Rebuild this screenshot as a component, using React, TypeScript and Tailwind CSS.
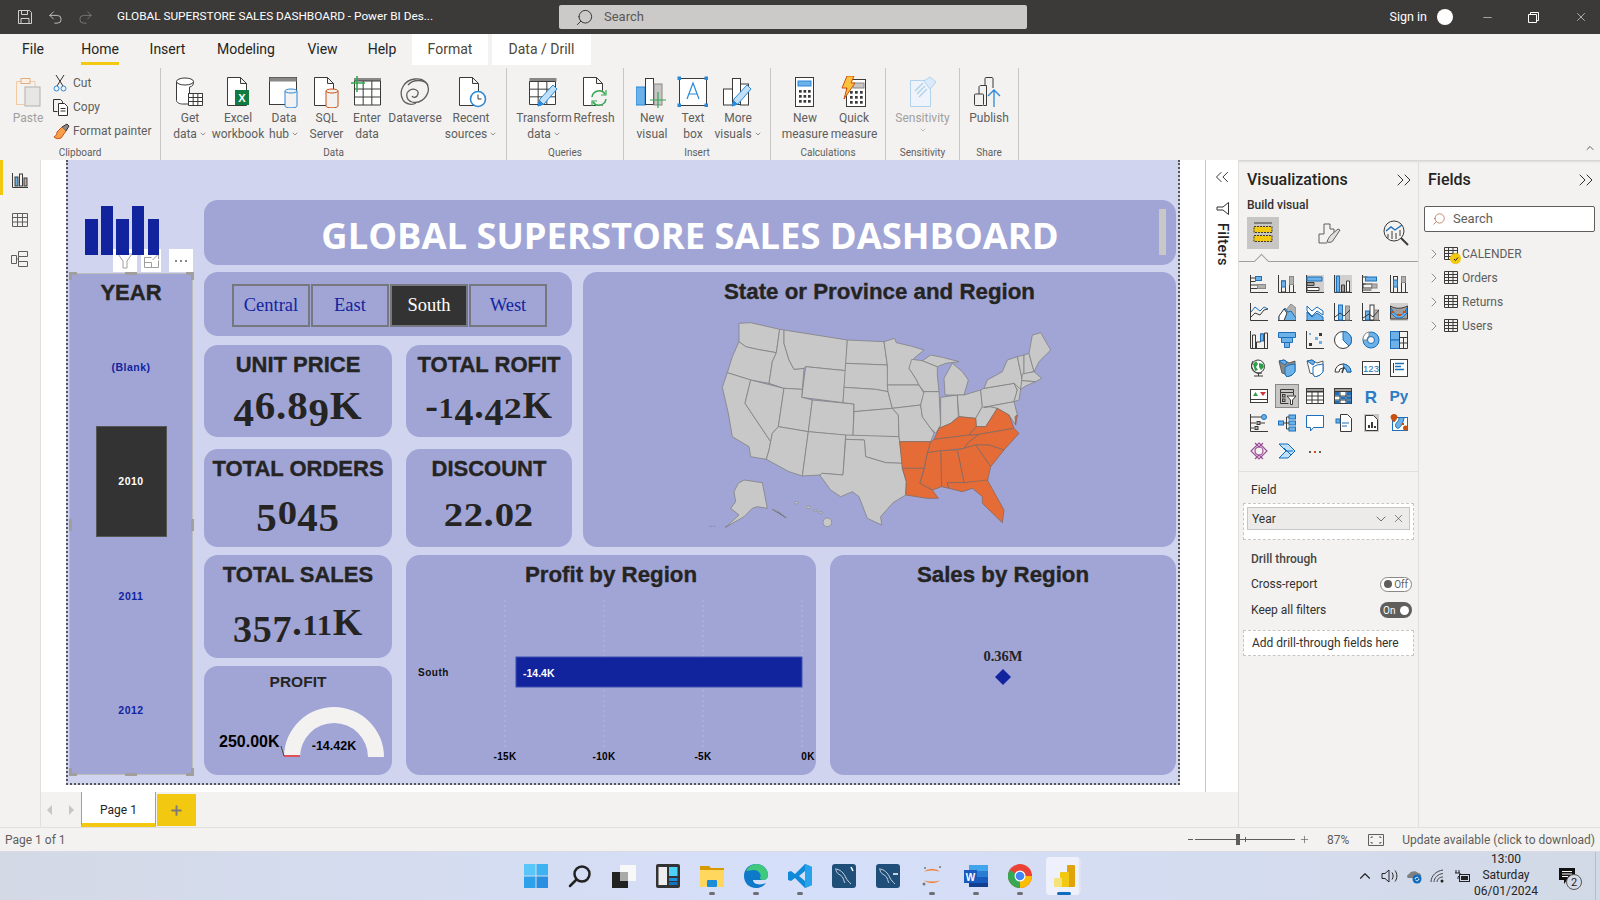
import React from 'react';
import { Search, ChevronRight, ChevronDown, ChevronsLeft, ChevronsRight, X, Minus, Undo2, Redo2, ChevronUp, Plus } from 'lucide-react';

const K = '#3b3a39', BF = '#6cb1e8', BS = '#1c6fb8', GF = '#b3b1af';
const ARIAL = "[font-family:'Liberation_Sans',Arial,sans-serif]";
const SERIF = "[font-family:'Liberation_Serif',serif]";
const UI = "[font-family:Roboto,sans-serif]";
const HEAVY = '[-webkit-text-stroke:0.35px_#252423]';

function I({ s = 32, vb = 32, children, className = '' }: { s?: number; vb?: number; children: React.ReactNode; className?: string }) {
  return <svg width={s} height={s} viewBox={`0 0 ${vb} ${vb}`} fill="none" stroke={K} strokeWidth={1} className={className}>{children}</svg>;
}
const Doc = ({ x = 5, w = 16, h = 28 }: { x?: number; w?: number; h?: number }) => (
  <path d={`M${x + .5} 1.5h${w - 6}l6 6v${h - 6}h-${w}z M${x + w - 6 + .5} 1.5v6h6`} fill="#fff" />
);
const Cyl = ({ x, y, w, h, c }: { x: number; y: number; w: number; h: number; c: string }) => (
  <g stroke={c} fill="#f3f2f1"><path d={`M${x} ${y + 2}v${h}c0 2.5 ${w} 2.5 ${w} 0v-${h}`} /><ellipse cx={x + w / 2} cy={y + 2} rx={w / 2} ry={2} /></g>
);
const Grid = ({ x, y, w, h, nx, ny }: { x: number; y: number; w: number; h: number; nx: number; ny: number }) => {
  const d: string[] = [`M${x} ${y}h${w}v${h}h-${w}z`];
  for (let i = 1; i < nx; i++) d.push(`M${x + (w * i) / nx} ${y}v${h}`);
  for (let j = 1; j < ny; j++) d.push(`M${x} ${y + (h * j) / ny}h${w}`);
  return <path d={d.join('')} fill="#fff" />;
};
const Pencil = ({ x = 0, y = 0 }: { x?: number; y?: number }) => (
  <g transform={`translate(${x} ${y})`}><path d="M2 27l2-7L17 6l4 4L8 25z" fill="#bfe0f8" stroke="#2b88d8" /><path d="M2 27l2-5 3 3z" fill="#2b88d8" stroke="#2b88d8" /></g>
);

const rib: Record<string, React.ReactNode> = {
  get: <I><path d="M2.5 5.5v19c0 2 3 3.5 6 3.5h7V11c3-.5 4-2 4-5.5" fill="#fff" /><ellipse cx="11" cy="5.5" rx="8.5" ry="3.5" fill="#fff" /><rect x="14" y="17" width="15" height="3" fill={K} stroke="none" /><Grid x={14.5} y={17.5} w={14} h={12} nx={3} ny={3} /></I>,
  excel: <I><Doc x={5} w={19} h={28} /><rect x="13" y="14" width="14" height="15" fill="#107c41" stroke="none" /><text x="20" y="26" textAnchor="middle" fontSize="11" fontWeight="700" fill="#fff" stroke="none" fontFamily="Liberation Sans">X</text></I>,
  hub: <I><rect x="1.5" y="1.5" width="27" height="27" fill="#fff" /><rect x="1.5" y="1.5" width="27" height="4" fill="#8a8886" stroke="none" /><Cyl x={17} y={13} w={12} h={15} c="#2b88d8" /></I>,
  sql: <I><Doc x={3} w={19} h={28} /><Cyl x={15} y={13} w={12} h={15} c="#ca5010" /></I>,
  enter: <I><rect x="3" y="2" width="27" height="3" fill="#8a8886" stroke="none" /><Grid x={3.5} y={5} w={26} h={24} nx={3} ny={3} /><path d="M6 0v16M0 7h14" stroke="#33a853" strokeWidth="1.6" /></I>,
  dv: <I><path d="M4 24C-1 15 5 4 16 3c9-1 15 5 13 13-2 7-9 12-16 10-6-2-7-9-2-12 4-2 9 0 8 4s-5 4-6 2" strokeWidth="1.3" stroke="#605e5c" /><path d="M4 24c3 5 10 5 13 3M29 9C25 3 14 3 9 9" stroke="#605e5c" strokeWidth="1.3" /></I>,
  recent: <I><Doc x={4} w={19} h={28} /><circle cx="23" cy="23" r="7.5" fill="#fff" stroke="#2b88d8" strokeWidth="1.6" /><path d="M23 18.5V23h3.5" /></I>,
  transform: <I><rect x="1.5" y="2" width="27" height="3.5" fill="#8a8886" stroke="none" /><Grid x={1.5} y={5.5} w={26} h={23} nx={3} ny={3} /><Pencil x={8} y={3} /></I>,
  refresh: <I><Doc x={5} w={19} h={28} /><circle cx="21" cy="22" r="8" fill="#f3f2f1" stroke="none" /><path d="M14 21c1-7 10-8 13-3M28 23c-1 7-10 8-13 3" stroke="#33a853" strokeWidth="1.5" /><path d="M28 14v5h-5M14 30v-5h5" stroke="#33a853" strokeWidth="1.2" /></I>,
  newv: <I><rect x="0" y="11" width="9" height="18" fill={BF} stroke="#2b88d8" /><rect x="9.5" y="2.5" width="8" height="26" fill="#fff" /><rect x="18" y="8" width="8" height="21" fill="#c8c6c4" stroke="#8a8886" /><path d="M22 16v16M14 24h16" stroke="#33a853" strokeWidth="1.2" /></I>,
  text: <I><rect x="2.5" y="2.5" width="27" height="27" fill="#fff" /><path d="M10 23l6-16 6 16M12 18h8" stroke="#2b88d8" strokeWidth="1.2" />{[[0.5, 0.5], [27.5, 0.5], [0.5, 27.5], [27.5, 27.5]].map(([a, b], i) => <rect key={i} x={a} y={b} width="3.5" height="3.5" fill="#2b88d8" stroke="none" />)}</I>,
  more: <I><rect x="1.5" y="13" width="9" height="16" fill="#fff" /><rect x="10.5" y="2.5" width="8" height="26" fill="#fff" /><rect x="18.5" y="8" width="8" height="21" fill="#fff" /><Pencil x={8} y={3} /></I>,
  newm: <I><rect x="6.5" y="1.5" width="18" height="29" fill="#fff" /><rect x="9" y="5" width="13" height="5" fill={BF} stroke="#2b88d8" />{[14, 19, 24].flatMap(y => [10, 14.5, 19].map(x => <rect key={`${x}${y}`} x={x} y={y} width="2.7" height="2.7" fill={K} stroke="none" />))}</I>,
  quick: <I><rect x="8.5" y="3.5" width="19" height="27" fill="#fff" /><rect x="15" y="7" width="11" height="5" fill="#c8c6c4" stroke="#8a8886" />{[15, 20, 25].flatMap(y => [12, 17, 22].map(x => <rect key={`${x}${y}`} x={x} y={y} width="2.7" height="2.7" fill={K} stroke="none" />))}<path d="M9 0h7l-3 7h4L6 23l3-11H4z" fill="#fcc23d" stroke="#ca5010" /></I>,
  sens: <I><path d="M3.5 4.5h20v26h-20z" stroke="#a9cfec" fill="#eef5fb" /><path d="M8 15l8-8M10 18l8-8M12 21l8-8" stroke="#a9cfec" strokeWidth="1.4" /><path d="M17 5l6-4 6 5-6 7z" stroke="#a9cfec" fill="#dbeafa" /></I>,
  pub: <I><rect x="1.5" y="18" width="9" height="11.5" fill="none" rx="1" /><path d="M6 18v-7c0-1 1-1.5 2-1.5h5.500V29.500H10.500M12 9V2.500c0-.5.5-1 1-1h6c.5 0 1 .5 1 1V12" /><path d="M21 31V14M15 20l6-6 6 6" stroke="#2b88d8" strokeWidth="1.3" /></I>,
};

function Rb({ w, icon, l1, l2, chev, dim }: { w: number; icon: string; l1: string; l2?: string; chev?: boolean; dim?: boolean }) {
  return (
    <div style={{ width: w }} className={`flex flex-col items-center text-[12px] leading-[16px] whitespace-nowrap ${dim ? 'text-[#a19f9d]' : 'text-[#605e5c]'}`}>
      <div className={`h-[32px] mt-[8px] mb-[2px] ${dim ? 'opacity-90' : ''}`}>{rib[icon]}</div>
      <div>{l1}</div>
      {(l2 || chev) && <div className="flex items-center gap-[2px]">{l2}{chev && <ChevronDown size={8} strokeWidth={2} />}</div>}
    </div>
  );
}
function Group({ w, label, pl = 0, children }: { w: number; label: string; pl?: number; children: React.ReactNode }) {
  return (
    <div style={{ width: w }} className="h-[92px] border-r border-[#c8c6c4] flex flex-col justify-between shrink-0">
      <div className="flex" style={{ paddingLeft: pl }}>{children}</div>
      <div className="text-center text-[10px] leading-[12px] text-[#605e5c] mb-[1px]">{label}</div>
    </div>
  );
}

function TitleBar() {
  return (
    <div className="h-[34px] bg-[#3b3a39] flex items-center text-white shrink-0 relative">
      <svg width="16" height="16" viewBox="0 0 16 16" fill="none" stroke="#d2d0ce" className="ml-[17px]"><path d="M1.500 1.500h11l2 2v11h-13zM4.500 1.500v4h6v-4M4 14.500v-5h8v5" /></svg>
      <Undo2 size={17} strokeWidth={1.2} color="#d2d0ce" className="ml-[14px]" />
      <Redo2 size={17} strokeWidth={1.2} color="#807e7c" className="ml-[13px]" />
      <div className="ml-[23px] w-[312px] text-[11.800px] whitespace-nowrap">GLOBAL SUPERSTORE SALES DASHBOARD - Power BI Des...</div>
      <div className="ml-[130px] w-[468px] h-[24px] bg-[#cbcac8] rounded-[2px] flex items-center text-[#5a5856] text-[13px] pl-[16px] gap-[10px]">
        <Search size={19} strokeWidth={1.2} color="#323130" className="-scale-x-100" />Search
      </div>
      <div className="ml-auto flex items-center">
        <span className="text-[12.500px]">Sign in</span>
        <span className="w-[16px] h-[16px] rounded-full bg-white ml-[10px] mr-[28px]" />
        <Minus size={13} strokeWidth={1} className="mr-[34px]" />
        <svg width="11" height="11" viewBox="0 0 11 11" fill="none" stroke="#fff" className="mr-[35px]"><path d="M.5 2.500h8v8h-8zM2.500 2.500v-2h8v8h-2" /></svg>
        <X size={14} strokeWidth={1} className="mr-[12px]" />
      </div>
    </div>
  );
}

function Tabs() {
  const t: [string, number, number][] = [['File', 23, 20], ['Home', 38, 38], ['Insert', 31, 35], ['Modeling', 32, 58], ['View', 33, 29], ['Help', 31, 28]];
  return (
    <div className="h-[34px] flex items-start text-[14px] text-[#252423] shrink-0">
      {t.map(([n, m, w]) => (
        <div key={n} style={{ marginLeft: m, width: w }} className="h-[31px] flex justify-center items-center relative whitespace-nowrap">
          {n}
          {n === 'Home' && <span className="absolute left-0 right-0 bottom-0 h-[3px] bg-[#f2c811]" />}
        </div>
      ))}
      <div className="ml-[16px] w-[76px] h-[31px] bg-white text-[#4f4636] flex items-center justify-center">Format</div>
      <div className="ml-[4px] w-[99px] h-[31px] bg-white text-[#4f4636] flex items-center justify-center">Data / Drill</div>
    </div>
  );
}

function Ribbon() {
  return (
    <div className="h-[92px] flex items-start relative shrink-0 text-[#605e5c]">
      <Group w={161} label="Clipboard">
        <div className="w-[56px] flex flex-col items-center text-[12px] text-[#a19f9d]">
          <div className="h-[32px] mt-[8px] mb-[2px]">
            <svg width="28" height="32" viewBox="0 0 28 32" fill="none"><path d="M2.500 5.500h5M16 5.500h5v5M2.500 5.500v23h8" stroke="#f2c9a0" /><rect x="7" y="2.500" width="9" height="5" stroke="#e0ad80" fill="#fbefe3" /><rect x="11" y="11" width="15" height="19" fill="#e8e6e4" stroke="#b3b0ad" /></svg>
          </div>
          <div className="leading-[16px]">Paste</div>
        </div>
        <div className="flex flex-col text-[12px] text-[#605e5c] pt-[3px] -ml-[3px]">
          <div className="h-[24px] flex items-center"><svg width="14" height="18" viewBox="0 0 14 18" fill="none" stroke="#323130"><path d="M3 1l7 11M11 1L4 12" /><circle cx="3.500" cy="14.500" r="2.500" stroke="#2b88d8" /><circle cx="10.500" cy="14.500" r="2.500" stroke="#2b88d8" /></svg><span className="ml-[6px]">Cut</span></div>
          <div className="h-[24px] flex items-center"><svg width="16" height="17" viewBox="0 0 16 17" fill="none" stroke="#323130"><path d="M.5.5h7l2 2v2M.5.5v12h4" /><path d="M5.500 4.500h6l3 3v9h-9z" fill="#fff" /><path d="M7.500 9.500h5M7.500 12h5" /></svg><span className="ml-[4px]">Copy</span></div>
          <div className="h-[24px] flex items-center"><svg width="17" height="17" viewBox="0 0 17 17" fill="none"><path d="M9 4l4 4-5 7c-2 1-5 1-7-1 2-1 3-3 3-5z" fill="#f7a04b" stroke="#ca5010" /><path d="M9 4l5-3 2 2-3 5" fill="#8a8886" stroke="#323130" /></svg><span className="ml-[3px] whitespace-nowrap">Format painter</span></div>
        </div>
      </Group>
      <Group w={346} label="Data" pl={5}>
        <Rb w={48} icon="get" l1="Get" l2="data" chev />
        <Rb w={48} icon="excel" l1="Excel" l2="workbook" />
        <Rb w={44} icon="hub" l1="Data" l2="hub" chev />
        <Rb w={41} icon="sql" l1="SQL" l2="Server" />
        <Rb w={40} icon="enter" l1="Enter" l2="data" />
        <Rb w={56} icon="dv" l1="Dataverse" />
        <Rb w={56} icon="recent" l1="Recent" l2="sources" chev />
      </Group>
      <Group w={117} label="Queries" pl={7}>
        <Rb w={60} icon="transform" l1="Transform" l2="data" chev />
        <Rb w={40} icon="refresh" l1="Refresh" />
      </Group>
      <Group w={147} label="Insert" pl={8}>
        <Rb w={40} icon="newv" l1="New" l2="visual" />
        <Rb w={42} icon="text" l1="Text" l2="box" />
        <Rb w={48} icon="more" l1="More" l2="visuals" chev />
      </Group>
      <Group w={115} label="Calculations" pl={8}>
        <Rb w={52} icon="newm" l1="New" l2="measure" />
        <Rb w={46} icon="quick" l1="Quick" l2="measure" />
      </Group>
      <Group w={74} label="Sensitivity">
        <Rb w={74} icon="sens" l1="Sensitivity" dim chev />
      </Group>
      <Group w={59} label="Share">
        <Rb w={59} icon="pub" l1="Publish" />
      </Group>
      <ChevronUp size={12} strokeWidth={1.5} className="absolute right-[4px] bottom-[6px]" color="#323130" />
    </div>
  );
}

type Pt = string;
const STATES: [Pt, boolean?][] = [
  ['150,70 185,68 272,88 262,158 205,148 170,140 150,125'],
  ['150,125 170,140 205,148 262,158 250,185 240,250 185,240 115,218 130,170'],
  ['115,218 185,240 168,310 245,425 240,450 232,478 185,470 180,440 130,410 118,340 100,262'],
  ['185,240 285,265 268,380 250,400 245,425 168,310'],
  ['272,88 285,90 285,130 300,180 315,208 345,205 340,268 285,265 240,250 250,185 262,158'],
  ['285,90 475,120 470,212 350,200 345,205 315,208 300,180 285,130'],
  ['350,200 470,212 462,308 338,292'],
  ['285,265 340,268 338,292 370,300 358,395 268,380'],
  ['370,300 495,312 492,408 358,395'],
  ['268,380 358,395 340,528 300,515 232,478 240,450 245,425 250,400'],
  ['358,395 470,405 462,525 400,520 392,525 340,528'],
  ['475,120 585,125 595,195 470,190'],
  ['470,190 595,195 597,275 560,268 465,262'],
  ['465,262 560,268 597,275 610,325 495,335 495,312 462,308'],
  ['495,335 610,325 628,345 630,410 492,408'],
  ['470,405 630,410 632,425 640,490 590,488 530,470 526,420 470,418'],
  ['470,418 526,420 530,470 590,488 640,490 640,505 652,545 650,585 612,608 575,650 578,675 535,655 510,590 490,575 455,590 425,570 392,525 400,520 462,525'],
  ['585,125 617,115 622,128 665,138 705,150 675,175 660,205 680,235 690,255 595,255 595,195'],
  ['595,255 690,255 705,280 695,315 610,325 597,275'],
  ['610,325 695,315 700,350 725,385 735,400 725,425 632,425 630,410 628,345'],
  ['668,178 700,182 745,200 745,225 750,275 705,275 690,255 680,235 660,205'],
  ['705,275 750,275 755,375 740,400 725,385 700,350 695,315'],
  ['755,292 805,285 808,350 785,370 750,385 755,375'],
  ['700,182 725,165 760,172 810,185 770,190 745,200'],
  ['768,285 765,235 790,190 820,215 838,240 825,285'],
  ['805,285 825,285 875,270 880,320 860,355 810,350'],
  ['880,320 905,320 925,325 890,380 862,380 860,355'],
  ['875,270 885,265 975,250 985,270 975,305 885,322 880,320'],
  ['885,265 895,240 940,215 955,180 985,170 1000,240 995,268 985,270 975,250'],
  ['885,322 975,305 985,345 978,372 960,345 925,325 905,320'],
  ['975,250 995,268 990,300 975,305 985,270'],
  ['985,170 1005,165 1005,222 1000,240'],
  ['1005,165 1020,160 1035,215 1005,222'],
  ['1020,160 1030,105 1055,98 1085,150 1050,185 1035,215'],
  ['1000,222 1035,215 1058,235 1040,245 998,242'],
  ['998,242 1040,245 1010,258 995,268'],
  ['165,540 220,548 235,625 205,620 190,625 165,650 130,670 110,682 150,645 125,625 140,605 135,575 148,550'],
  ['735,418 750,385 785,370 810,350 860,355 862,380 840,405', true],
  ['735,418 840,405 870,403 840,425 825,445 715,458 725,425', true],
  ['840,405 862,380 890,380 925,325 960,345 975,385 870,403', true],
  ['870,403 975,385 990,400 945,450 900,435 860,435 825,445 840,425', true],
  ['860,435 900,435 945,450 905,500', true],
  ['805,450 825,445 860,435 905,500 895,545 825,548', true],
  ['755,452 805,450 825,548 775,548 780,565 758,560', true],
  ['715,458 755,452 758,560 730,570 692,550 705,510', true],
  ['632,425 725,425 715,458 705,505 640,505', true],
  ['640,505 705,505 692,550 730,570 748,595 715,595 650,585 652,545', true],
  ['775,548 825,548 895,540 945,630 940,668 880,610 880,590 850,565 820,575 780,565', true],
  ['978,350 985,345 980,375', true],
];
function USMap() {
  return (
    <svg width="380" height="240" viewBox="0 0 1140 720" className="ml-[106px] -mt-[5px]">
      {STATES.map(([p, s], i) => <polygon key={i} points={p} fill={s ? '#e66c37' : '#c8c8c8'} stroke={s ? '#85695f' : '#828282'} strokeWidth="2.4" strokeLinejoin="round" />)}
      {[[322, 608, 5, 4], [358, 622, 6, 4], [380, 632, 5, 3], [395, 638, 5, 3], [415, 667, 13, 13]].map(([x, y, a, b], i) => <ellipse key={i} cx={x} cy={y} rx={a} ry={b} fill="#c8c8c8" stroke="#828282" strokeWidth="2" />)}
      <path d="M250 628l20 10 22 16" stroke="#828282" strokeWidth="5" strokeDasharray="4 2" />
      <path d="M60 679h20M108 680l14-5" stroke="#828282" strokeWidth="3" strokeDasharray="3 3" />
    </svg>
  );
}

function Old({ s }: { s: string }) {
  return (
    <>
      {s.split('').map((c, i) =>
        '02'.includes(c) ? <span key={i} className="inline-block w-[0.6em] text-center text-[0.8em] scale-x-[1.18]">{c}</span> :
        c === '1' ? <span key={i} className="text-[0.8em]">{c}</span> :
        '34579'.includes(c) ? <span key={i} className="relative top-[0.18em]">{c}</span> :
        <span key={i}>{c}</span>
      )}
    </>
  );
}

function Kpi({ t, v, className, gap = 0, small }: { t: string; v: string; className: string; gap?: number; small?: boolean }) {
  return (
    <div className={`bg-[#a0a5d6] rounded-[14px] flex flex-col items-center pt-[7px] ${className}`}>
      <div className={`${ARIAL} ${HEAVY} font-bold text-[22px] leading-[26px] text-[#252423] whitespace-nowrap`}>{t}</div>
      <div style={{ marginTop: gap }} className={`${SERIF} font-bold ${small ? 'text-[38px]' : 'text-[41px]'} leading-[44px] text-[#252423] tracking-[0.02em] whitespace-nowrap`}><Old s={v} /></div>
    </div>
  );
}

function YearSlicer() {
  const Handle = ({ c }: { c: string }) => <span className={`absolute bg-[#a19f9d] ${c}`} />;
  return (
    <div className="relative h-[502px] ml-[1px] w-[124px] bg-[#a0a5d6] border border-[#bdbdbd] flex flex-col">
      <div className={`${ARIAL} ${HEAVY} font-bold text-[22px] leading-[26px] text-[#252423] text-center pt-[6px] h-[37px]`}>YEAR</div>
      {['(Blank)', '2010', '2011', '2012'].map(y => (
        <div key={y} className={`h-[114.3px] flex items-center justify-center ${ARIAL} font-bold text-[10.5px] tracking-[0.5px]`}>
          {y === '2010'
            ? <div className="w-[71px] h-[111px] -translate-y-[1px] bg-[#333333] border border-[#555] text-white flex items-center justify-center">2010</div>
            : <span className="text-[#12239e]">{y}</span>}
        </div>
      ))}
      <div className="absolute -top-[25px] left-[43px] flex">
        <div className="w-[24px] h-[23px] bg-white flex items-center justify-center"><svg width="16" height="16" viewBox="0 0 16 16" fill="none" stroke="#a19f9d"><path d="M1 1h14l-5 7v7H6V8z" /></svg></div>
        <div className="ml-[4px] w-[20px] h-[23px] bg-white flex items-center justify-center"><svg width="15" height="14" viewBox="0 0 15 14" fill="none" stroke="#a19f9d"><path d="M.5 3.500h7M.5 3.500v10h14v-7M.5 8.500h7v5M8.500 6L14 .5M10 .5h4.500v4.500" /></svg></div>
        <div className="ml-[8px] w-[24px] h-[23px] bg-white flex items-center justify-center gap-[3px]">{[0, 1, 2].map(i => <span key={i} className="w-[2px] h-[2px] bg-[#8a8886]" />)}</div>
      </div>
      <Handle c="-top-[2px] -left-[1px] w-[8px] h-[3px]" />
      <Handle c="-top-[2px] -left-[1px] w-[3px] h-[8px]" />
      <Handle c="-top-[2px] -right-[2px] w-[8px] h-[3px]" />
      <Handle c="-top-[2px] -right-[2px] w-[3px] h-[8px]" />
      <Handle c="-top-[2px] left-[55px] w-[12px] h-[3px]" />
      <Handle c="-bottom-[2px] -left-[1px] w-[8px] h-[3px]" />
      <Handle c="-bottom-[2px] -left-[1px] w-[3px] h-[8px]" />
      <Handle c="-bottom-[2px] -right-[2px] w-[8px] h-[3px]" />
      <Handle c="-bottom-[2px] -right-[2px] w-[3px] h-[8px]" />
      <Handle c="-bottom-[2px] left-[55px] w-[12px] h-[3px]" />
      <Handle c="top-[245px] -right-[2px] w-[3px] h-[12px]" />
      <Handle c="top-[245px] -left-[1px] w-[3px] h-[12px]" />
    </div>
  );
}

function Dashboard() {
  const Reg = ({ n, on }: { n: string; on?: boolean }) => (
    <div className={`w-[78px] h-[43px] border-2 border-[#77787f] flex items-center justify-center pt-[2px] ${SERIF} text-[18.500px] ${on ? 'bg-[#333333] text-white' : 'text-[#12239e]'}`}>{n}</div>
  );
  const card = 'bg-[#a0a5d6] rounded-[14px]';
  const bigT = `${ARIAL} ${HEAVY} font-bold text-[22.300px] leading-[26px] text-[#252423] text-center`;
  return (
    <div className="w-[1114px] h-[625px] ml-[25px] bg-[#d0d4ee] border-x-2 border-b-2 border-dotted border-[#555] flex shrink-0">
      <div className="w-[125px] shrink-0 flex flex-col">
        <svg width="76" height="49" viewBox="0 0 76 49" className="ml-[17px] mt-[46px] relative z-10" fill="#12239e">
          <rect x="0" y="13" width="13" height="36" /><rect x="16" y="0" width="12" height="49" /><rect x="31" y="13" width="13" height="36" /><rect x="47" y="0" width="12" height="49" /><rect x="63" y="13" width="11" height="36" />
        </svg>
        <div className="mt-[18px]"><YearSlicer /></div>
      </div>
      <div className="w-[972px] ml-[11px] pt-[40px] flex flex-col shrink-0">
        <div className={`${card} h-[65px] relative flex items-center justify-center shrink-0`}>
          <div className="[font-family:'Open_Sans',sans-serif] font-bold text-white text-[36.300px] leading-none whitespace-nowrap pt-[5px]">GLOBAL SUPERSTORE SALES DASHBOARD</div>
          <span className="absolute right-[10px] top-[9px] w-[7px] h-[46px] bg-[#c8c8c8]" />
        </div>
        <div className="flex mt-[7px] h-[275px] gap-[11px] shrink-0">
          <div className="w-[368px] flex flex-col">
            <div className={`${card} h-[64px] flex items-center gap-[1px] pl-[28px] pt-[2px]`}>
              <Reg n="Central" /><Reg n="East" /><Reg n="South" on /><Reg n="West" />
            </div>
            <div className="flex mt-[9px] justify-between">
              <Kpi t="UNIT PRICE" v="46.89K" className="w-[188px] h-[92px]" gap={5} />
              <Kpi t="TOTAL ROFIT" v="-14.42K" className="w-[166px] h-[92px]" gap={5} small />
            </div>
            <div className="flex mt-[12px] justify-between">
              <Kpi t="TOTAL ORDERS" v="5045" className="w-[188px] h-[98px]" gap={6} />
              <Kpi t="DISCOUNT" v="22.02" className="w-[166px] h-[98px]" gap={8} />
            </div>
          </div>
          <div className={`${card} w-[593px] flex flex-col`}>
            <div className={`${bigT} pt-[7px]`}>State or Province and Region</div>
            <USMap />
          </div>
        </div>
        <div className="flex mt-[8px] h-[220px] gap-[14px] shrink-0">
          <div className="w-[188px] flex flex-col gap-[8px]">
            <Kpi t="TOTAL SALES" v="357.11K" className="h-[103px]" gap={12} small />
            <div className={`${card} h-[109px] flex flex-col items-center pt-[7px]`}>
              <div className={`${ARIAL} font-bold text-[15.500px] leading-[18px] text-[#252423]`}>PROFIT</div>
              <svg width="188" height="84" viewBox="0 25 188 84">
                <path d="M80 91A50 50 0 0 1 180 91H164A34 34 0 0 0 96 91Z" fill="#f3f2f1" />
                <rect x="80" y="89" width="16" height="2" fill="#e0505a" />
                <path d="M77 80l3 10" stroke="#444" strokeWidth="1" fill="none" />
                <text x="15" y="81" fontFamily="Liberation Sans" fontWeight="700" fontSize="16" fill="#000">250.00K</text>
                <text x="130" y="84" textAnchor="middle" fontFamily="Liberation Sans" fontWeight="700" fontSize="12.500" fill="#000">-14.42K</text>
              </svg>
            </div>
          </div>
          <div className={`${card} w-[410px] flex flex-col pt-[7px]`}>
            <div className={bigT}>Profit by Region</div>
            <svg width="410" height="187" viewBox="0 33 410 187">
              {[99, 198, 297, 396].map(x => <path key={x} d={`M${x} 45V192`} stroke="#b6bade" strokeDasharray="2 3" />)}
              <rect x="110" y="102" width="286" height="30" fill="#12239e" stroke="#3d4fb0" />
              <text x="117" y="122" fontFamily="Liberation Sans" fontWeight="700" fontSize="10.500" fill="#fff">-14.4K</text>
              <text x="12" y="121" fontFamily="Liberation Sans" fontWeight="700" fontSize="10" letterSpacing="0.5" fill="#111">South</text>
              {[['-15K', 99], ['-10K', 198], ['-5K', 297], ['0K', 402]].map(([t, x]) => <text key={t} x={x} y="205" textAnchor="middle" fontFamily="Liberation Sans" fontWeight="700" fontSize="10" letterSpacing="0.3" fill="#000">{t}</text>)}
            </svg>
          </div>
          <div className={`${card} w-[346px] flex flex-col pt-[7px] items-center`}>
            <div className={bigT}>Sales by Region</div>
            <div className={`${SERIF} font-bold text-[14.500px] leading-[16px] text-[#252423] mt-[60px]`}>0.36M</div>
            <svg width="16" height="16" viewBox="0 0 16 16" className="mt-[5px]"><path d="M8 0l8 8-8 8-8-8z" fill="#12239e" /></svg>
          </div>
        </div>
      </div>
    </div>
  );
}

function Rail() {
  return (
    <div className="w-[41px] shrink-0 bg-[#f3f2f1] border-r border-[#e1dfdd] flex flex-col items-center relative">
      <span className="absolute left-0 top-0 w-[3px] h-[35px] bg-[#f2c811]" />
      <svg width="16" height="16" viewBox="0 0 16 16" className="mt-[12px]" fill="none" stroke={K}><path d="M.5 1v14.500H16" /><rect x="3" y="5" width="3" height="9" fill={BF} /><rect x="7.500" y="2" width="3" height="12" /><rect x="12" y="6" width="3" height="8" fill={GF} /></svg>
      <svg width="16" height="14" viewBox="0 0 16 14" className="mt-[25px]" fill="none" stroke="#605e5c"><path d="M.5.5h15v13H.5zM.5 4.500h15M.5 9h15M5.500.5v13M10.500.5v13" /></svg>
      <svg width="18" height="18" viewBox="0 0 18 18" className="mt-[23px]" fill="none" stroke="#605e5c"><path d="M7.500 1.500h9v5h-9zM7.500 11.500h9v5h-9zM.5 5.500h5v8h-5zM5.500 9H7.500M7.500 4v10" /></svg>
    </div>
  );
}

const V = (c: React.ReactNode, k?: string) => <svg key={k} width="18" height="18" viewBox="0 0 18 18" fill="none" stroke={K}>{c}</svg>;
const AX = <path d="M.5 0v17.500H18" />;
const GAL: React.ReactNode[] = [
  <>{AX}<path d="M.5 3h5M.5 6.500h5M.5 10h7M.5 13.500h7" /><rect x="5.500" y="1.500" width="6" height="4" fill={BF} stroke={BS} /><rect x="7.500" y="9.500" width="8" height="4" fill={GF} stroke="#8a8886" /></>,
  <>{AX}<rect x="3.500" y="6" width="4" height="11" stroke={K} /><rect x="3.500" y="6" width="4" height="6" fill={BF} stroke={BS} /><rect x="11.500" y="1.500" width="4" height="16" /><rect x="11.500" y="1.500" width="4" height="8" fill={GF} stroke="#8a8886" /></>,
  <><rect x="0" y="0" width="18" height="18" fill="#d2d0ce" stroke="none" />{AX}<path d="M1 2h15v4H1z" fill={BF} stroke={BS} /><path d="M1 7.500h7v3H1z" fill="#a19f9d" /><path d="M1 12.500h12v3H1z" fill="#fff" /></>,
  <><rect x="0" y="0" width="18" height="18" fill="#d2d0ce" stroke="none" />{AX}<path d="M2.500 1h3v16h-3z" fill={BF} stroke={BS} /><path d="M7.500 10h3v7h-3z" fill="#a19f9d" /><path d="M12.500 6h3v11h-3z" fill="#fff" /></>,
  <>{AX}<path d="M.5 2h5M.5 15h9M.5 9h3" /><rect x="3.500" y="2" width="11" height="4" fill={BF} stroke={BS} /><rect x="1" y="9" width="9" height="4" stroke={K} /><rect x="10" y="9" width="5" height="4" fill={GF} stroke="#8a8886" /></>,
  <>{AX}<rect x="3.500" y="1.500" width="4" height="16" /><rect x="3.500" y="5" width="4" height="7" fill={BF} stroke={BS} /><rect x="11.500" y="1.500" width="4" height="16" /><rect x="11.500" y="1.500" width="4" height="6" fill={GF} stroke="#8a8886" /></>,
  <>{AX}<path d="M1 9l4-5 5 4 4-4 4 2" stroke={BS} /><path d="M1 14l4-4 5 2 4-5 4-1" stroke={K} /></>,
  <><path d="M8 7l5-6 5 4v12H10z" fill={GF} stroke="#8a8886" /><path d="M1 14l6-9 3 4 3-1 5 7v2.500H1z" fill={BF} stroke={BS} /><path d="M1 13l5-7 3 4-3 7.500H1z" fill="#fff" stroke={K} /><path d="M0 17.500h18" /></>,
  <><path d="M1 3l5 5 5-4 6 4v4l-6-4-5 5-5-5z" fill="#fff" stroke={BS} /><path d="M1 9l5 5 5-4 6 4v3.500H1z" fill={BF} stroke={BS} /><path d="M0 17.500h18" /></>,
  <>{AX}<rect x="4.500" y="2" width="4" height="15" fill={BF} stroke={BS} /><rect x="11.500" y="3" width="4" height="14" fill={GF} stroke="#8a8886" /><path d="M1 14l5-4 4 3 6-6" /></>,
  <>{AX}<rect x="3.500" y="8" width="4" height="9" fill={BF} stroke={BS} /><rect x="8" y="2" width="4" height="15" fill="#fff" /><rect x="12.500" y="7" width="4" height="10" fill={GF} stroke="#8a8886" /><path d="M1 15l6-4 4 3 6-7" /></>,
  <><rect x="0" y="0" width="18" height="18" fill="#d2d0ce" stroke="none" /><path d="M.5 3c5 3 11 3 17 0v13H.5z" fill="#a19f9d" /><path d="M1 5c3 5 4 7 8 7s5-2 8-7v5c-3 3-4 5-8 5S4 13 1 10z" fill={BF} stroke={BS} /><path d="M1 9h3M7 12h4M13 9h3" stroke="#ca5010" strokeWidth="2" /></>,
  <>{AX}<path d="M2.500 17V4h3v13M6.500 17v-6h4V3h3v4h-3M14.500 17V2h3v15" /><rect x="10.500" y="3" width="3" height="7" fill={BF} stroke={BS} /></>,
  <><path d="M.5 1.500h17v5h-17z" fill={BF} stroke={BS} /><path d="M3.500 6.500h11v5h-11z" fill={BF} stroke={BS} /><path d="M6.500 11.500h5v5h-5z" fill={BF} stroke={BS} /></>,
  <>{AX}<rect x="3" y="12" width="3" height="3" fill={K} stroke="none" /><rect x="13" y="2" width="3" height="3" fill={K} stroke="none" /><rect x="3" y="2" width="2" height="2" fill={BF} stroke="none" /><rect x="9" y="6" width="3" height="3" fill={BF} stroke="none" /><rect x="13" y="10" width="3" height="3" fill={BF} stroke="none" /></>,
  <><circle cx="9" cy="9" r="8.500" fill="#fff" /><path d="M9 .5A8.500 8.500 0 0 1 15 15L9 9z" fill={BF} stroke={BS} /></>,
  <><circle cx="9" cy="9" r="8" fill={BF} stroke={BS} /><path d="M1 9a8 8 0 0 1 6-8v4a4 4 0 0 0-2 4z" fill="#fff" stroke="#8a8886" /><circle cx="9" cy="9" r="3.500" fill="#f3f2f1" stroke={BS} /></>,
  <><rect x=".5" y=".5" width="9" height="8.500" fill={BF} stroke={BS} /><rect x=".5" y="9" width="9" height="8.500" fill={BF} stroke={BS} /><rect x="9.500" y=".5" width="8" height="6" /><path d="M9.500 6.500h8v11h-8zM13.500 6.500v11M9.500 12h8" /></>,
  <><circle cx="8" cy="7.500" r="6.500" fill="#fff" /><path d="M3 5l3-3 2 3-2 3 2 3-3 1zM9 4l4 1 1 3-3 3-2-3z" fill="#2e9e49" stroke="none" /><path d="M4 17h9M8.500 14v3M3 2a8 8 0 0 0 9 12" /></>,
  <><path d="M1 2l5-1 5 3 6-2v10l-3 4-5 2-2-3-3-1z" fill="#8a8886" stroke="#605e5c" /><path d="M7 8l4-2 6-1v8l-3 3-5 2-2-3z" fill={BF} stroke={BS} /><path d="M1 2l5-1 3 2-2 3z" fill={BF} stroke={BS} /></>,
  <><path d="M1 2l5-1 5 3 6-2v10l-3 4-5 2-2-3-3-1z" fill="#fff" stroke="#605e5c" /><path d="M7 8l4-2 6-1v8l-3 3-5 2-2-3z" fill="#fff" stroke={BS} /><path d="M1 2l5-1 3 2-2 3z" fill={BF} stroke={BS} /></>,
  <><path d="M1 13a8 8 0 0 1 16 0h-4a4 4 0 0 0-8 0z" fill="#fff" stroke={K} /><path d="M9 5a8 8 0 0 1 8 8h-4a4 4 0 0 0-3-4z" fill={BF} stroke={BS} /><path d="M10 8l-2 6" strokeWidth="1.500" /></>,
  <><rect x=".5" y="2.500" width="17" height="13" fill="#fff" /><text x="9" y="12.500" textAnchor="middle" fontSize="9.500" fill={BS} stroke="none" fontFamily="Liberation Sans">123</text></>,
  <><rect x=".5" y=".5" width="17" height="17" fill="#fff" /><path d="M3.500 4v10" /><path d="M5 4.500h9M5 7.500h6M5 10.500h9" stroke={BS} strokeWidth="1.500" /></>,
  <><rect x=".5" y="2.500" width="17" height="13" fill="#fff" /><path d="M3 9l2.500-4L8 9z" fill="#2e9e49" stroke="none" /><path d="M10 5h6l-3 4z" fill="#d13438" stroke="none" /><path d="M1 12.500h16" /></>,
  <><path d="M2.500 2.500h13v3h-13zM2.500 5.500v11h8M15.500 5.500v3" /><rect x="4.500" y="7.500" width="2.500" height="2.500" fill={GF} /><rect x="4.500" y="12" width="2.500" height="2.500" fill={GF} /><path d="M9 9h9l-3.500 4v4.500h-2V13z" fill="#fff" /></>,
  <><rect x=".5" y="1.500" width="17" height="15" fill="#fff" /><path d="M.5 5h17M.5 9h17M.5 13h17M6 5v11M12 5v11" /><rect x=".5" y="1.500" width="17" height="3" fill="#a19f9d" /></>,
  <><rect x=".5" y="1.500" width="17" height="15" fill="#fff" /><rect x=".5" y="1.500" width="17" height="3" fill="#a19f9d" /><path d="M.5 9h17M.5 13h17M6 5v11M12 5v11" /><rect x="1" y="5" width="4.500" height="3.500" fill={BS} stroke="none" /><rect x="6.500" y="9.500" width="5" height="3" fill={BS} stroke="none" /><rect x="12.500" y="5" width="4.500" height="3.500" fill={BS} stroke="none" /><rect x="12.500" y="9.500" width="4.500" height="3" fill={BS} stroke="none" /><rect x="1" y="13.500" width="4.500" height="3" fill={BS} stroke="none" /><rect x="12.500" y="13.500" width="4.500" height="3" fill={BS} stroke="none" /></>,
  <text x="9" y="15.500" textAnchor="middle" fontSize="17" fontWeight="700" fill="#2b7cc4" stroke="none" fontFamily="Liberation Sans">R</text>,
  <text x="9" y="14" textAnchor="middle" fontSize="15.500" fontWeight="700" fill="#2b7cc4" stroke="none" fontFamily="Liberation Sans">Py</text>,
  <>{AX}<path d="M1 3h10M1 9h5M1 14h3" /><circle cx="14" cy="3" r="2.500" fill={BF} stroke={BS} /><rect x="7" y="7.500" width="3" height="3" fill={GF} /><rect x="5" y="12.500" width="3" height="3" fill={GF} /><path d="M10 9h5" /></>,
  <><rect x=".5" y="7" width="5" height="4" fill={BF} stroke={BS} /><rect x="11" y="1" width="6.500" height="4" fill={BF} stroke={BS} /><rect x="11" y="7" width="6.500" height="4" fill={BF} stroke={BS} /><rect x="11" y="13" width="6.500" height="4" fill={BF} stroke={BS} /><path d="M5.500 9H11M8.500 3v12M8.500 3H11M8.500 15H11" /></>,
  <path d="M.5 1.500h17v12H7.500l-3 3.500v-3.500h-4z" fill="#fff" stroke={BS} />,
  <><path d="M6.500.5h7l4 4v13h-11z" fill="#fff" /><rect x="2" y="5" width="4" height="4" fill={BF} stroke={BS} /><path d="M8 9h7M8 12h5" stroke={BS} /></>,
  <><rect x="2" y="0" width="15" height="18" fill="#c8c6c4" stroke="none" /><path d="M3.500 1.500h8l4 4v11h-12z" fill="#fff" /><path d="M6 14V11h2v3zM9 14V8h2v6zM12 14v-2h2v2z" fill={K} stroke="none" /></>,
  <><rect x="2.500" y="3.500" width="15" height="13" fill="#fff" stroke={BS} /><path d="M9 4c0 4-5 5-3 9s7-2 8-9" fill={BF} stroke={BS} /><path d="M4 .5c2 0 3 1 3 2.500 0 2-3 5-3 5S1 5 1 3c0-1.500 1-2.500 3-2.500z" fill="#ca5010" stroke="#ca5010" /><circle cx="15.500" cy="14" r="2.500" fill="#ca5010" stroke="none" /><rect x="12" y="9" width="2" height="2" fill="#ca5010" stroke="none" /></>,
  <g stroke="#9b4f96" strokeWidth="1.200"><path d="M9 1l8 8-8 8-8-8z" /><path d="M9 5l-4-4M9 5l4-4M9 13l-4 4M9 13l4 4" /><path d="M5 9a4 4 0 0 1 8 0 4 4 0 0 1-8 0z" /></g>,
  <g stroke="#0f6cbd"><path d="M1 2h9l7 7-7 7H1l7-7z" fill="#bfe0f8" /><path d="M8 9l7 0M6 6l7 7" stroke="#0f6cbd" /></g>,
  <g fill="#605e5c" stroke="none"><rect x="3" y="9" width="2" height="2" /><rect x="8" y="9" width="2" height="2" fill="#ca5010" /><rect x="13" y="9" width="2" height="2" /></g>,
];

function Toggle({ on }: { on?: boolean }) {
  return on ? (
    <span className="w-[32px] h-[16px] rounded-full bg-[#605e5c] flex items-center justify-between px-[3px] text-[10px] text-white">On<span className="w-[9px] h-[9px] rounded-full bg-white" /></span>
  ) : (
    <span className="w-[32px] h-[15px] rounded-full border border-[#8a8886] bg-white flex items-center justify-between px-[3px] text-[10px] text-[#605e5c]"><span className="w-[8px] h-[8px] rounded-full bg-[#605e5c]" />Off</span>
  );
}

function VizPane() {
  return (
    <div className="w-[181px] shrink-0 border-x border-[#e1dfdd] flex flex-col text-[#323130] text-[12px] relative">
      <div className="h-[38px] flex items-center justify-between pl-[8px] pr-[2px] pt-[1px]">
        <span className="text-[16px] font-medium text-[#252423]">Visualizations</span>
        <ChevronsRight size={24} strokeWidth={1} />
      </div>
      <div className="h-[14px] leading-[14px] pl-[8px] font-medium">Build visual</div>
      <div className="mt-[5px] h-[32px] flex items-center pl-[8px] relative">
        <div className="w-[32px] h-[32px] bg-[#c8c6c4] flex items-center justify-center">
          <svg width="24" height="24" viewBox="0 0 24 24" fill="none" stroke={K}><path d="M3 2h18" /><rect x="3" y="5.500" width="18" height="6" fill="#f2c811" strokeDasharray="2 1" /><rect x="3" y="14.500" width="18" height="6" fill="#f2c811" strokeDasharray="2 1" /></svg>
        </div>
        <svg width="24" height="24" viewBox="0 0 24 24" fill="none" stroke="#605e5c" className="ml-[39px]"><path d="M1 22v-9h5V3h6v5h4v5M1 22h8" /><path d="M9 21c3 1 6 0 7-3l6-9-2-1-7 6c-2 2-3 4-4 7z" fill="#e1dfdd" /></svg>
        <svg width="26" height="26" viewBox="0 0 26 26" fill="none" stroke={K} className="ml-[41px]"><circle cx="11" cy="11" r="10" /><path d="M18 18l7 7" strokeWidth="2" /><path d="M5 14v4M9 11v8M13 13v6M17 10v6" /><path d="M3 11l5-4 4 3 7-5" stroke={BS} strokeWidth="1.400" /></svg>
      </div>
      <div className="mt-[12px] h-[1px] bg-[#a19f9d] relative">
        <span className="absolute left-[17px] -top-[5px] w-[11px] h-[11px] rotate-45 bg-[#f3f2f1] border-l border-t border-[#a19f9d]" />
      </div>
      <div className="grid grid-cols-[repeat(6,28px)] auto-rows-[27.900px] pl-[6px] mt-[8px] justify-items-center items-center">
        {GAL.map((g, i) => (
          <div key={i} className={`flex items-center justify-center ${i === 25 ? 'w-[24px] h-[24px] bg-[#c8c6c4] border border-[#8a8886]' : ''}`}>{V(g)}</div>
        ))}
      </div>
      <div className="mt-[6px] h-[1px] bg-[#e1dfdd]" />
      <div className="pl-[12px] mt-[11px] h-[14px] leading-[14px]">Field</div>
      <div className="mx-[4px] mt-[6px] h-[37px] border border-dashed border-[#c8c6c4] bg-white p-[3px]">
        <div className="h-[23px] bg-[#edebe9] border border-[#c8c6c4] flex items-center px-[4px]">
          <span>Year</span>
          <ChevronDown size={16} strokeWidth={1} className="ml-auto" />
          <X size={13} strokeWidth={1} className="ml-[3px]" />
        </div>
      </div>
      <div className="pl-[12px] mt-[12px] h-[14px] leading-[14px] font-medium text-[#484644]">Drill through</div>
      <div className="pl-[12px] pr-[6px] mt-[10px] h-[16px] flex items-center justify-between"><span>Cross-report</span><Toggle /></div>
      <div className="pl-[12px] pr-[6px] mt-[10px] h-[16px] flex items-center justify-between"><span>Keep all filters</span><Toggle on /></div>
      <div className="mx-[4px] mt-[12px] h-[26px] border border-dashed border-[#c8c6c4] bg-white flex items-center pl-[8px] text-[#323130]">Add drill-through fields here</div>
    </div>
  );
}

function FieldsPane() {
  const Tb = () => <svg width="15" height="14" viewBox="0 0 15 14" fill="none" stroke={K} className="mr-[3px]"><path d="M.5.5h13v12H.5zM.5 3.500h13M.5 6.500h13M.5 9.500h13M4.500.5v12M9 .5v12" /></svg>;
  return (
    <div className="w-[181px] shrink-0 flex flex-col text-[12px] text-[#605e5c]">
      <div className="h-[38px] flex items-center justify-between pl-[9px] pr-[2px] pt-[1px]">
        <span className="text-[16px] font-medium text-[#252423]">Fields</span>
        <ChevronsRight size={24} strokeWidth={1} color="#323130" />
      </div>
      <div className="mx-[5px] mt-[8px] h-[26px] bg-white border border-[#605e5c] rounded-[2px] flex items-center pl-[7px] gap-[7px] text-[13px]">
        <Search size={14} strokeWidth={1.100} color="#a0522d" className="-scale-x-100" />Search
      </div>
      <div className="mt-[10px] flex flex-col pl-[7px]">
        {['CALENDER', 'Orders', 'Returns', 'Users'].map((n, i) => (
          <div key={n} className="h-[24px] flex items-center">
            <ChevronRight size={16} strokeWidth={1} className="mr-[2px]" />
            {i === 0 ? (
              <span className="relative mr-[5px] flex">
                <Tb />
                <span className="absolute left-[6px] top-[6px] w-[11px] h-[11px] rounded-full bg-[#f2c811] flex items-center justify-center">
                  <svg width="6" height="6" viewBox="0 0 6 6" fill="none" stroke="#252423"><path d="M1 3l1.500 1.500L5 1.500" /></svg>
                </span>
              </span>
            ) : <Tb />}
            <span className={i === 0 ? '-ml-[5px]' : ''}>{n}</span>
          </div>
        ))}
      </div>
    </div>
  );
}

function PageTabs() {
  return (
    <div className="h-[35px] flex items-stretch shrink-0">
      <div className="w-[40px] flex items-center justify-between pl-[6px] pr-[6px]">
        <svg width="6" height="10" viewBox="0 0 6 10"><path d="M5 0v10L0 5z" fill="#c8c6c4" /></svg>
        <svg width="6" height="10" viewBox="0 0 6 10"><path d="M0 0v10l5-5z" fill="#c8c6c4" /></svg>
      </div>
      <div className="w-[75px] pt-[5px] bg-white border-x border-[#a19f9d] border-b-[4px] border-b-[#f2c811] flex items-center justify-center text-[12px] text-[#252423]">Page 1</div>
      <div className="ml-[1px] w-[39px] h-[32px] mt-[2px] bg-[#f2c811] flex items-center justify-center"><Plus size={15} strokeWidth={3} color="#7a7a7a" /></div>
    </div>
  );
}

function StatusBar() {
  return (
    <div className="h-[25px] border-t border-[#e1dfdd] flex items-center text-[12px] text-[#605e5c] shrink-0 border-b border-b-[#d9d9e3]">
      <span className="ml-[5px]">Page 1 of 1</span>
      <div className="ml-auto flex items-center">
        <span className="w-[5px] h-[1.500px] bg-[#605e5c]" />
        <div className="ml-[2px] w-[100px] h-[1px] bg-[#605e5c] relative">
          <span className="absolute left-[41px] -top-[5px] w-[4px] h-[11px] bg-[#605e5c]" />
          <span className="absolute left-[50px] -top-[2px] w-[1px] h-[5px] bg-[#605e5c]" />
        </div>
        <Plus size={11} strokeWidth={1.500} className="ml-[4px]" />
        <span className="ml-[17px]">87%</span>
        <svg width="16" height="12" viewBox="0 0 16 12" fill="none" stroke="#605e5c" className="ml-[19px]"><path d="M.5.5h15v11H.5z" /><path d="M3 4V3h2M11 3h2v1M3 8v1h2M11 9h2V8" /></svg>
        <span className="ml-[18px] mr-[5px] whitespace-nowrap">Update available (click to download)</span>
      </div>
    </div>
  );
}

const Tk = ({ children, dot, active }: { children: React.ReactNode; dot?: boolean; active?: boolean }) => (
  <div className="w-[44px] h-[48px] flex items-center justify-center relative">
    {active && <span className="absolute left-[4px] top-[5px] w-[35px] h-[38px] rounded-[4px] bg-[#eef1fb] border-r-2 border-[#dfe3f3]" />}
    <span className="relative flex">{children}</span>
    {dot && <span className="absolute bottom-[5px] left-[19px] w-[6px] h-[3px] rounded-full bg-[#6d6d72]" />}
    {active && <span className="absolute bottom-[5px] left-[15px] w-[14px] h-[3px] rounded-full bg-[#0f6cbd]" />}
  </div>
);

function Taskbar() {
  return (
    <div className="h-[48px] relative flex justify-center bg-gradient-to-r from-[#d3d9e5] via-[#d6dffa] to-[#d2d9e6] shrink-0">
      <Tk><svg width="24" height="24" viewBox="0 0 24 24"><rect width="11.500" height="11.500" fill="#59c6f9" /><rect x="12.500" width="11.500" height="11.500" fill="#3fb2f2" /><rect y="12.500" width="11.500" height="11.500" fill="#2fa0ea" /><rect x="12.500" y="12.500" width="11.500" height="11.500" fill="#2a8fe0" /></svg></Tk>
      <Tk><svg width="24" height="24" viewBox="0 0 24 24" fill="none" stroke="#222" strokeWidth="2.500"><circle cx="14" cy="10" r="7.500" /><path d="M8.500 15.500L2 22" strokeLinecap="round" /></svg></Tk>
      <Tk><svg width="24" height="24" viewBox="0 0 24 24"><rect x="8" y="1" width="16" height="16" fill="#f8f8f8" /><rect x="0" y="8" width="16" height="16" fill="#222" /><rect x="8" y="8" width="8" height="9" fill="#aaa" /></svg></Tk>
      <Tk><svg width="24" height="24" viewBox="0 0 24 24"><rect width="24" height="24" rx="2" fill="#333" /><rect x="2.500" y="3" width="8.500" height="18" fill="#eee" /><rect x="13" y="3" width="8.500" height="9" fill="#4cd2f7" /><rect x="13" y="14" width="8.500" height="3" fill="#1990dc" /><rect x="13" y="18" width="8.500" height="3" fill="#1072c4" /></svg></Tk>
      <Tk dot><svg width="24" height="24" viewBox="0 0 24 24"><path d="M0 2h9l2 2h13v6H0z" fill="#d69a00" /><rect y="6" width="24" height="17" fill="#ffd75e" /><rect x="7" y="16" width="10" height="7" rx="1" fill="#1a8cd8" /></svg></Tk>
      <Tk dot><svg width="24" height="24" viewBox="0 0 24 24"><path d="M12 0c7 0 12 5 12 11 0 4-3 5-5 5H9c0 4 6 6 13 3-2 3-6 5-10 5C5 24 0 19 0 12S5 0 12 0z" fill="#0f79c9" /><path d="M2 7c2-4 6-7 10-7 7 0 12 5 12 11 0 3-2 5-5 5-2 0-3-1-3-2 2-3-1-8-6-8-3 0-6 1-8 1z" fill="#3ec97e" /></svg></Tk>
      <Tk dot><svg width="24" height="24" viewBox="0 0 24 24"><path d="M17 0l7 3v18l-7 3L7 14l-4 3-3-1V8l3-1 4 3zM17 7l-6 5 6 5z" fill="#0f8ad8" /><path d="M17 0l7 3v18l-7 3z" fill="#27a3ec" /></svg></Tk>
      <Tk><svg width="24" height="24" viewBox="0 0 24 24" fill="none"><rect width="24" height="24" rx="3" fill="#1f4e79" /><path d="M3 5c5 0 9 4 11 9 1 2 3 4 5 6M4 6c1 5 5 4 7 8 1 2 1 4 2 5" stroke="#c8d4e0" strokeWidth="1" /><path d="M19 3l2 4" stroke="#fff" strokeWidth="1.500" /></svg></Tk>
      <Tk><svg width="24" height="24" viewBox="0 0 24 24" fill="none"><rect width="24" height="24" rx="3" fill="#1f4e79" /><path d="M3 5c5 0 9 4 11 9 1 2 3 4 5 6M4 6c1 5 5 4 7 8 1 2 1 4 2 5" stroke="#c8d4e0" strokeWidth="1" /><path d="M17 10h5" stroke="#fff" strokeWidth="1.500" /></svg></Tk>
      <Tk dot><svg width="24" height="24" viewBox="0 0 24 24" fill="none"><path d="M4 8c3-4 13-4 16 0-3-2-13-2-16 0zM4 16c3 4 13 4 16 0-3 2-13 2-16 0z" fill="#f37726" /><circle cx="4" cy="20" r="1.500" fill="#777" /><circle cx="20" cy="3" r="1" fill="#777" /><circle cx="5" cy="4" r="1" fill="#777" /></svg></Tk>
      <Tk dot><svg width="24" height="24" viewBox="0 0 24 24"><rect x="5" y="1" width="19" height="6" fill="#41a5ee" /><rect x="5" y="7" width="19" height="6" fill="#2b7cd3" /><rect x="5" y="13" width="19" height="6" fill="#185abd" /><rect x="5" y="19" width="19" height="4" fill="#103f91" /><rect y="6" width="13" height="13" fill="#185abd" /><text x="6.500" y="16.500" textAnchor="middle" fontSize="10" fontWeight="700" fill="#fff" fontFamily="Liberation Sans">W</text></svg></Tk>
      <Tk dot><svg width="24" height="24" viewBox="0 0 24 24"><circle cx="12" cy="12" r="12" fill="#ea4335" /><path d="M12 12L1.600 6A12 12 0 0 0 12 24z" fill="#34a853" /><path d="M12 12h12A12 12 0 0 1 12 24z" fill="#fbbc04" /><circle cx="12" cy="12" r="5.500" fill="#fff" /><circle cx="12" cy="12" r="4.300" fill="#4285f4" /></svg></Tk>
      <Tk active><svg width="24" height="24" viewBox="0 0 24 24"><rect x="15" y="1" width="8" height="22" rx="1" fill="#e0a30b" /><rect x="8" y="8" width="9" height="15" rx="1" fill="#f2c811" /><rect x="2" y="14" width="8" height="9" rx="1" fill="#f6e27a" /></svg></Tk>

      <div className="absolute right-0 top-0 h-[48px] flex items-center text-[#252423]">
        <ChevronUp size={18} strokeWidth={1.500} className="mr-[7px]" />
        <svg width="17" height="16" viewBox="0 0 17 16" fill="none" stroke="#252423" className="mr-[7px]"><path d="M1 5.500h3L8 2v12L4 10.500H1z" /><path d="M11 4.500c1.500 2 1.500 5 0 7M14 2.500c2.500 3 2.500 8 0 11" /></svg>
        <svg width="17" height="15" viewBox="0 0 17 15" className="mr-[8px]"><path d="M2 8a3 3 0 0 1 2-3c1-3 7-4 9-1 2 0 4 2 3 5H3z" fill="#808080" /><circle cx="12" cy="10" r="4.500" fill="#0f6cbd" /><path d="M10 10a2 2 0 0 1 3.500-1M14 10a2 2 0 0 1-3.500 1" stroke="#fff" fill="none" /></svg>
        <svg width="16" height="14" viewBox="0 0 16 14" fill="none" stroke="#444" className="mr-[9px]"><path d="M1 13C1 7 6 2 13 1M4 13c0-4 4-8 9-8.500M7 13c0-3 3-5 6-5" /><circle cx="12" cy="12" r="1.500" fill="#222" stroke="none" /></svg>
        <svg width="16" height="13" viewBox="0 0 16 13" fill="none" stroke="#222" className="mr-[5px]"><path d="M1 0v3M4 0v3M0 3h5v2l-2 2v2" /><rect x="4.500" y="4.500" width="10" height="7" /><rect x="6" y="6" width="7" height="4" fill="#222" stroke="none" /></svg>
        <div className="w-[60px] text-center text-[12px] leading-[15.700px] whitespace-nowrap flex flex-col items-center">
          <span>13:00</span><span>Saturday</span><span>06/01/2024</span>
        </div>
        <div className="relative ml-[23px] mr-[25px] w-[16px] h-[16px]">
          <svg width="16" height="16" viewBox="0 0 16 16"><path d="M0 0h16v12H8l-3 4v-4H0z" fill="#111" /><path d="M3 3.500h10M3 6h10M3 8.500h6" stroke="#fff" /></svg>
          <span className="absolute left-[7px] top-[6px] w-[16px] h-[16px] rounded-full bg-[#d4dae6] border border-[#555] flex items-center justify-center text-[11px] leading-none">2</span>
        </div>
        <span className="absolute right-[4px] top-0 h-full w-[1px] bg-[#b8bdca]" />
      </div>
    </div>
  );
}

export default function App() {
  return (
    <div className={`w-[1600px] h-[900px] overflow-hidden flex flex-col bg-[#f3f2f1] text-[#252423] ${UI}`}>
      <TitleBar />
      <Tabs />
      <Ribbon />
      <div className="h-[667px] flex shrink-0 shadow-[inset_0_3px_3px_-2px_rgba(0,0,0,0.18)]">
        <Rail />
        <div className="w-[1197px] shrink-0 flex flex-col">
          <div className="h-[632px] flex shrink-0">
            <div className="w-[1164px] bg-white shrink-0"><Dashboard /></div>
            <div className="w-[33px] bg-white border-l border-[#c8c6c4] flex flex-col items-center shrink-0">
              <ChevronsLeft size={22} strokeWidth={1} className="mt-[6px]" />
              <svg width="13" height="13" viewBox="0 0 13 13" fill="none" stroke="#323130" className="mt-[14px] rotate-90"><path d="M.5.5h12L8 6v6H5V6z" /></svg>
              <span className="mt-[8px] [writing-mode:vertical-rl] text-[14.500px] font-medium tracking-[0.3px]">Filters</span>
            </div>
          </div>
          <PageTabs />
        </div>
        <VizPane />
        <FieldsPane />
      </div>
      <StatusBar />
      <Taskbar />
    </div>
  );
}
